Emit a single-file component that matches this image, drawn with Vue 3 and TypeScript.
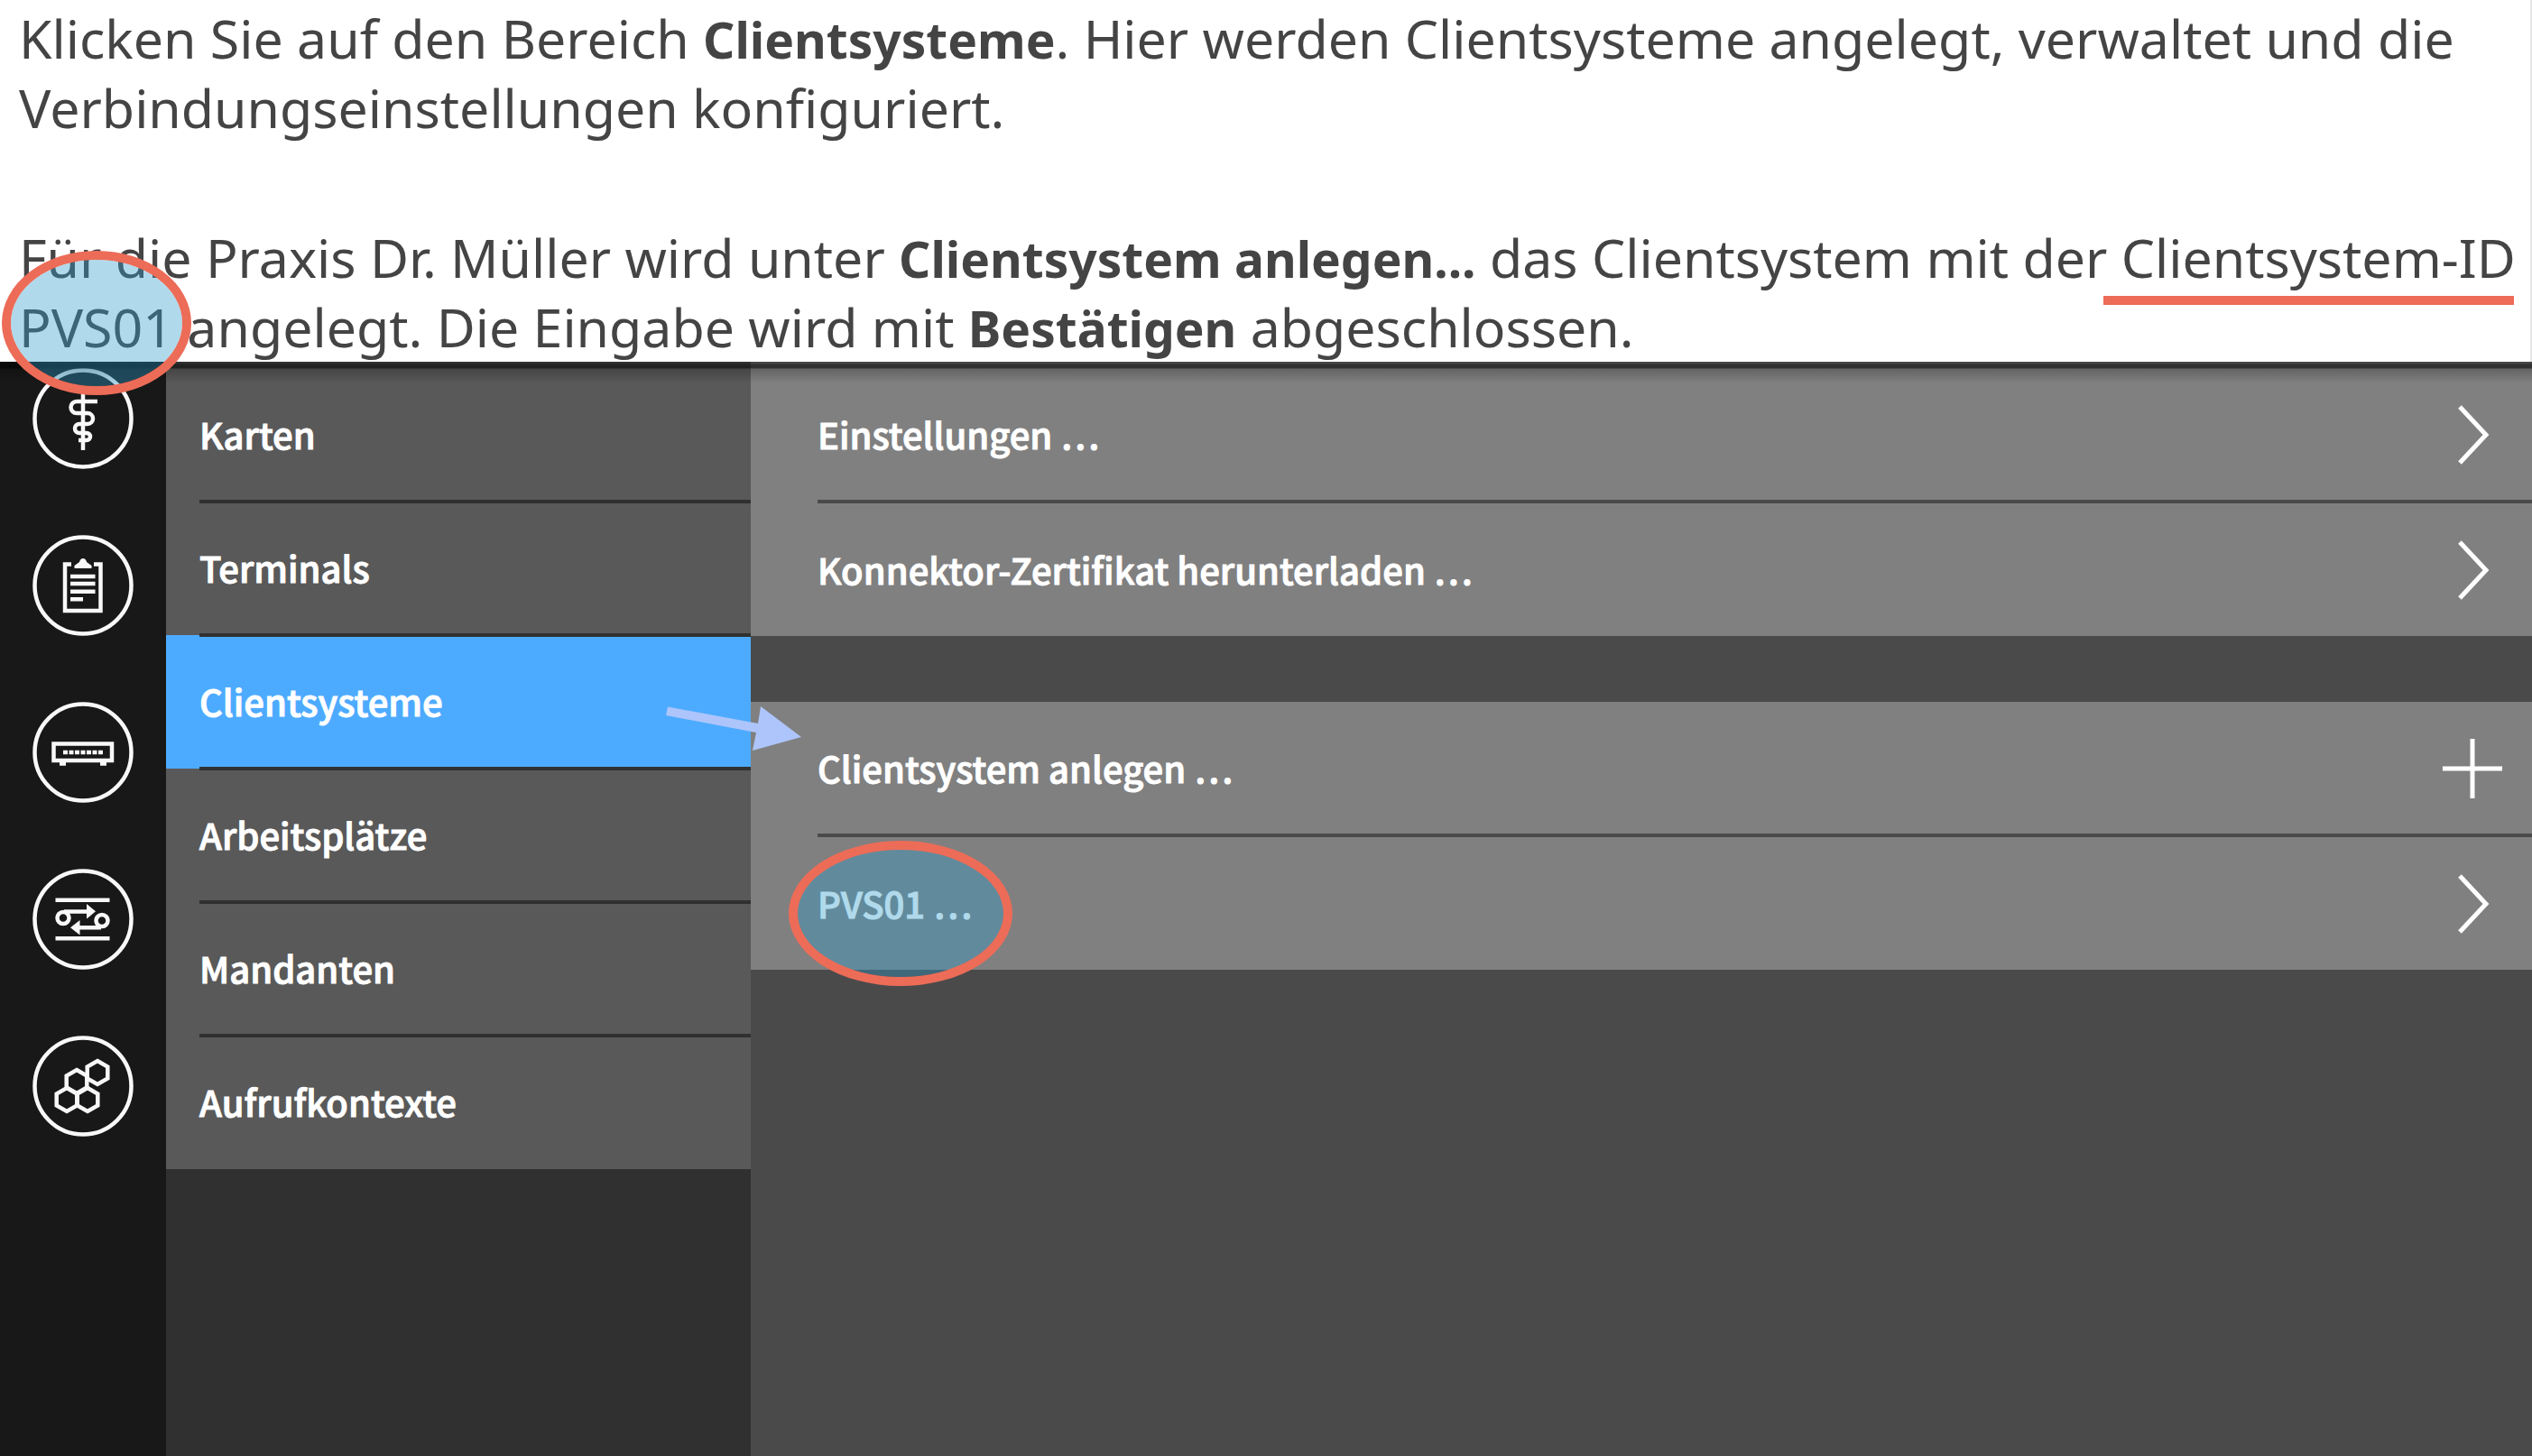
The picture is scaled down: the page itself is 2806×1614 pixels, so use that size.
<script setup lang="ts">
import { ref } from 'vue'

interface Row {
  label: string
  action: 'open' | 'add'
  marked?: boolean
}

const menu: string[] = ['Karten', 'Terminals', 'Clientsysteme', 'Arbeitsplätze', 'Mandanten', 'Aufrufkontexte']
const active = ref('Clientsysteme')

const groups: Row[][] = [
  [
    { label: 'Einstellungen …', action: 'open' },
    { label: 'Konnektor-Zertifikat herunterladen …', action: 'open' },
  ],
  [
    { label: 'Clientsystem anlegen …', action: 'add' },
    { label: 'PVS01 …', action: 'open', marked: true },
  ],
]

// Pointy-top hexagon around a centre point
function hexagon(cx: number, cy: number): string {
  const r = 13
  return Array.from({ length: 6 }, (_, i) => {
    const a = (Math.PI / 3) * i - Math.PI / 2
    return `${(cx + r * Math.cos(a)).toFixed(1)},${(cy + r * Math.sin(a)).toFixed(1)}`
  }).join(' ')
}
const cells = [hexagon(72, 41), hexagon(49, 51), hexagon(38, 71), hexagon(61, 71)]
</script>

<template>
  <main class="page">
    <header class="guide">
      <p>
        <span class="line">Klicken Sie auf den Bereich <b>Clientsysteme</b>. Hier werden Clientsysteme angelegt, verwaltet und die</span>
        <span class="line">Verbindungseinstellungen konfiguriert.</span>
      </p>
      <p>
        <span class="line">Für die Praxis Dr. Müller wird unter <b>Clientsystem anlegen...</b> das Clientsystem mit der
          <span class="underlined">Clientsystem-ID</span></span>
        <span class="line"><span class="circled">PVS01</span> angelegt. Die Eingabe wird mit <b>Bestätigen</b> abgeschlossen.</span>
      </p>
    </header>

    <div class="app">
      <nav class="rail" aria-label="Bereiche">
        <button type="button" aria-label="Praxis">
          <svg viewBox="0 0 112 112">
            <circle cx="56" cy="56" r="53.5" />
            <path d="M56 24V91" />
            <path d="M72 37H49a6.5 6.5 0 0 0 0 13H61a6 6 0 0 1 0 12H52a5 5 0 0 0 0 10H60a4 4 0 0 1 0 8H51" />
          </svg>
        </button>
        <button type="button" aria-label="Protokoll">
          <svg viewBox="0 0 112 112">
            <circle cx="56" cy="56" r="53.5" />
            <path d="M43 32.5H36V84H75.5V32.5H68" />
            <path class="solid" d="M46.5 37v-3l5.5-4q1-4 4-4t4 4l5.5 4v3z" />
            <path d="M42 46H69.5M42 54H69.5M42 62.7H69.5M42 71.3H56" />
          </svg>
        </button>
        <button type="button" aria-label="Netzwerk">
          <svg viewBox="0 0 112 112">
            <circle cx="56" cy="56" r="53.5" />
            <path d="M23.5 46.5H88V65H23.5z" />
            <path d="M30 68.5h7M75 68.5h7" />
            <path stroke-dasharray="5 1.5" d="M34 56H78" />
          </svg>
        </button>
        <button type="button" aria-label="Verbindungen">
          <svg viewBox="0 0 112 112">
            <circle cx="56" cy="56" r="53.5" />
            <path d="M25.5 34.7H85.5M25.5 77.3H85.5" />
            <circle cx="34" cy="54.5" r="6.5" />
            <circle cx="77" cy="57.5" r="6.5" />
            <path d="M35 47.5H62M76 65.3H50" />
            <path class="solid" d="M60 39l10 8.3-10 8.3zM52.5 57v16.5L42 65.3z" />
          </svg>
        </button>
        <button type="button" aria-label="Module">
          <svg viewBox="0 0 112 112">
            <circle cx="56" cy="56" r="53.5" />
            <polygon v-for="cell in cells" :key="cell" :points="cell" />
          </svg>
        </button>
      </nav>

      <nav class="menu" aria-label="Menü">
        <ul>
          <li v-for="item in menu" :key="item" :class="{ active: item === active }">
            <button type="button" @click="active = item"><span class="label">{{ item }}</span></button>
            <svg v-if="item === 'Clientsysteme'" class="arrow" viewBox="0 0 152 50">
              <path d="M3 0.5L103 19L106 0L151 34L97 49L101 29L1 10z" />
            </svg>
          </li>
        </ul>
      </nav>

      <section class="content">
        <ul v-for="(group, i) in groups" :key="i">
          <li v-for="row in group" :key="row.label">
            <button type="button">
              <span class="label" :class="{ marked: row.marked }">{{ row.label }}</span>
              <svg class="glyph" viewBox="0 0 66 66">
                <path v-if="row.action === 'open'" d="M19 2L48 33L19 64" />
                <path v-else d="M0 33H66M33 0V66" />
              </svg>
            </button>
          </li>
        </ul>
      </section>
    </div>
  </main>
</template>

<style>
body {
  margin: 0;
}
</style>

<style scoped>
.page {
  display: flex;
  flex-direction: column;
  min-height: 100vh;
  background: #fff;
}

.guide {
  position: relative;
  z-index: 2;
  padding: 4px 0 0 21px;
  border-right: 2px solid #e6e6e6;
  color: #444;
  font-family: "Noto Sans", "Open Sans", sans-serif;
  font-size: 59px;
  line-height: 77px;
}

.guide p {
  margin: 0;
}

.guide p + p {
  margin-top: 89px;
}

.guide b {
  font-size: 55px;
  font-weight: 700;
  line-height: 1;
}

.line {
  display: block;
  height: 77px;
  white-space: nowrap;
}

.underlined,
.circled,
.marked {
  position: relative;
}

.underlined::after {
  content: "";
  position: absolute;
  left: -20px;
  right: 2px;
  bottom: -13px;
  height: 10px;
  background: #ec6c58;
}

.circled::after,
.marked::after {
  content: "";
  position: absolute;
  box-sizing: border-box;
  border: 10px solid #ec6c58;
  border-radius: 50%;
  background: rgba(47, 158, 205, 0.38);
  background-clip: padding-box;
}

.circled::after {
  top: -44px;
  left: -19px;
  width: 210px;
  height: 160px;
}

.marked::after {
  top: -37px;
  left: -32px;
  width: 248px;
  height: 161px;
}

.app {
  position: relative;
  flex: 1;
  display: flex;
  background: #4a4a4a;
  font-family: "Noto Sans CJK SC", sans-serif;
  font-size: 40px;
  font-weight: 500;
  line-height: 64px;
  color: #fff;
  -webkit-text-stroke: 1px #fff;
}

.app::before {
  content: "";
  position: absolute;
  z-index: 1;
  inset: 0 0 auto;
  height: 24px;
  background: linear-gradient(
    rgba(0, 0, 0, 0.45) 2px,
    rgba(0, 0, 0, 0.62) 3px,
    rgba(0, 0, 0, 0.62) 7px,
    rgba(0, 0, 0, 0.22) 8px,
    transparent
  );
}

button {
  border: 0;
  padding: 0;
  background: none;
  color: inherit;
  font: inherit;
  text-align: left;
}

ul {
  margin: 0;
  padding: 0;
  list-style: none;
}

.rail {
  display: flex;
  flex-direction: column;
  gap: 73px;
  padding: 7px 36px 0;
  background: #181818;
}

.rail button {
  width: 112px;
  height: 112px;
}

.rail svg {
  display: block;
  fill: none;
  stroke: #f8f8f8;
  stroke-width: 4.5;
}

.rail .solid {
  fill: #f8f8f8;
  stroke: none;
}

.menu {
  position: relative;
  width: 648px;
  background: #303030;
}

.menu ul,
.content ul:first-child {
  padding-top: 7px;
}

.menu ul {
  background: #595959;
}

li {
  position: relative;
}

li button {
  display: flex;
  align-items: center;
  justify-content: space-between;
  width: 100%;
  height: 148px;
}

.label {
  margin-bottom: 2px;
}

.menu li button {
  padding-left: 37px;
}

.active {
  background: #4dabff;
}

li + li::before {
  content: "";
  position: absolute;
  top: -2px;
  left: 37px;
  right: 0;
  height: 4px;
  background: #303030;
}

.arrow {
  position: absolute;
  z-index: 2;
  top: 79px;
  right: -57px;
  width: 152px;
  height: 50px;
  fill: #adc5fa;
}

.content {
  flex: 1;
  display: flex;
  flex-direction: column;
  gap: 73px;
}

.content ul {
  background: #808080;
}

.content li button {
  padding: 0 33px 0 74px;
}

.content li + li button {
  height: 149px;
  padding-top: 2px;
}

.content li + li::before {
  left: 74px;
  background: #4a4a4a;
}

.glyph {
  width: 66px;
  height: 66px;
  fill: none;
  stroke: #fff;
  stroke-width: 5;
}
</style>
